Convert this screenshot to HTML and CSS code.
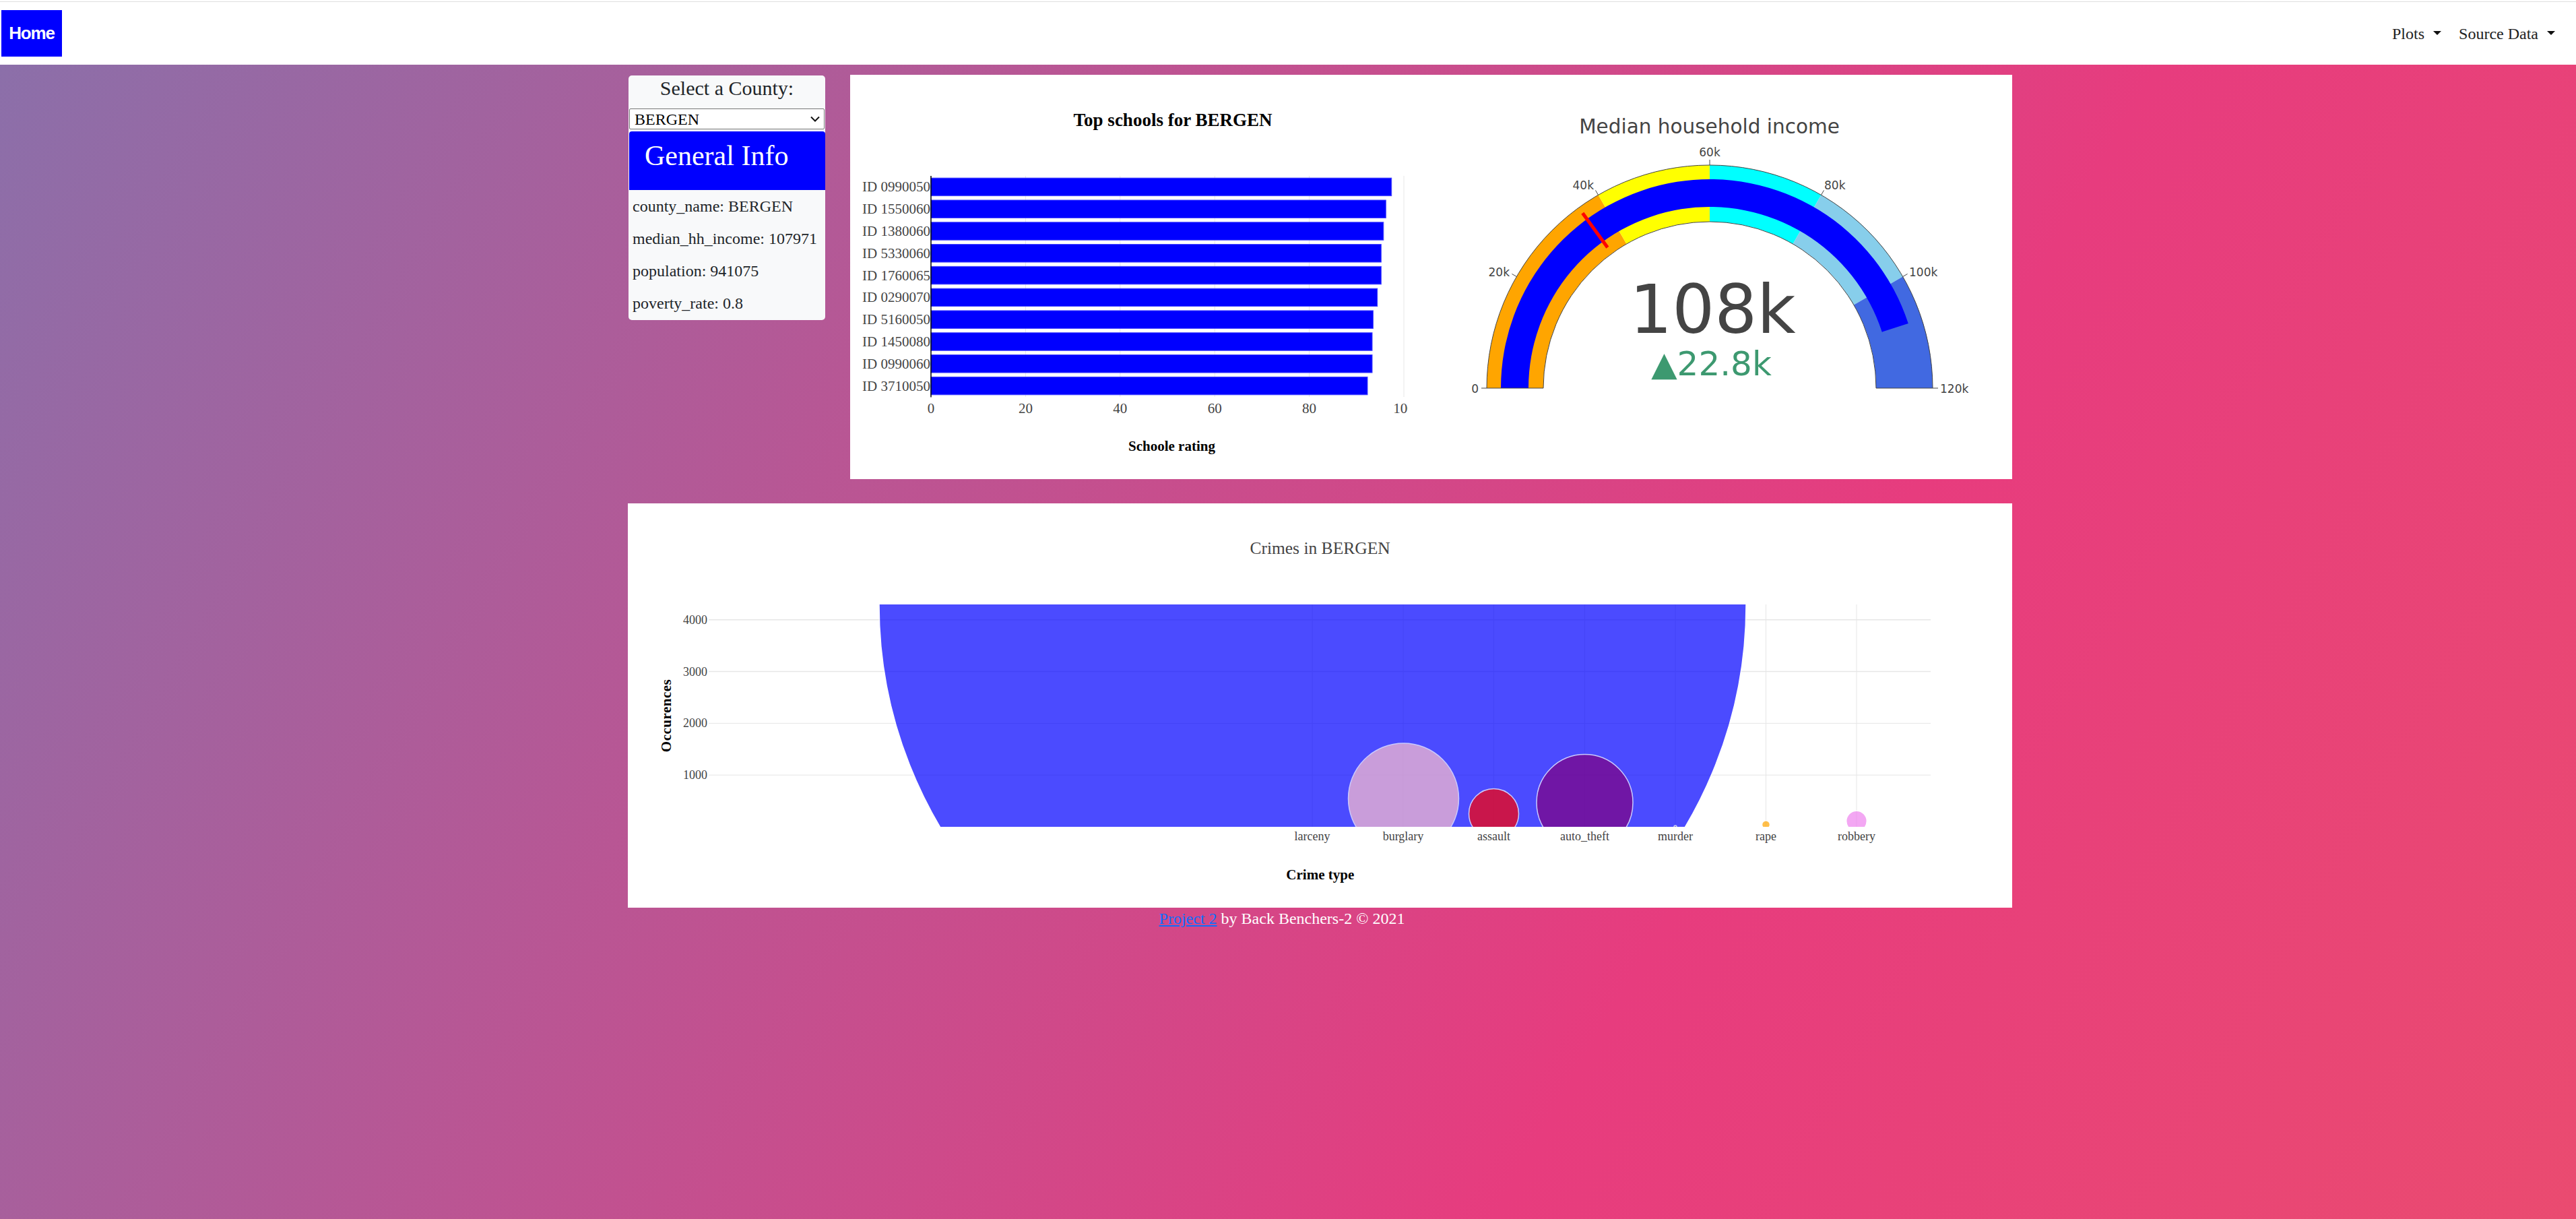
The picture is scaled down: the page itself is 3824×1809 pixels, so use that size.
FILE: index.html
```html
<!DOCTYPE html>
<html lang="en">
<head>
<meta charset="utf-8">
<title>County Dashboard</title>
<link rel="stylesheet" href="styles.css">
</head>
<body>
<header class="topbar">
  <nav class="nav">
    <a class="home" href="#">Home</a>
    <ul class="menu">
      <li><a href="#">Plots<span class="caret"></span></a></li>
      <li><a href="#">Source Data<span class="caret"></span></a></li>
    </ul>
  </nav>
</header>

<main class="main">
  <div class="row1">
    <aside class="panel">
      <div class="panel-label">Select a County:</div>
      <div class="select-wrap">
        <select class="county-select"><option>BERGEN</option></select>
        <svg class="chev" width="14" height="9" viewBox="0 0 14 9"><path d="M1 1.5 L7 7.5 L13 1.5" fill="none" stroke="#111" stroke-width="2"/></svg>
      </div>
      <div class="info-head">General Info</div>
      <div class="info-line">county_name: BERGEN</div>
      <div class="info-line">median_hh_income: 107971</div>
      <div class="info-line">population: 941075</div>
      <div class="info-line">poverty_rate: 0.8</div>
    </aside>

    <section class="chart-card">
      <svg class="bar-chart" width="828" height="600" viewBox="0 0 828 600">
        <text class="ttl-bold" x="479" y="76" text-anchor="middle">Top schools for BERGEN</text>
        <g stroke="#e6e6e6" stroke-width="1">
          <line x1="260.4" y1="150" x2="260.4" y2="478"/>
          <line x1="400.8" y1="150" x2="400.8" y2="478"/>
          <line x1="541.2" y1="150" x2="541.2" y2="478"/>
          <line x1="681.6" y1="150" x2="681.6" y2="478"/>
          <line x1="822" y1="150" x2="822" y2="478"/>
        </g>
        <g fill="#0000ff" stroke="#4646ff" stroke-width="1">
          <rect x="120" y="153.15" width="683.7" height="26.5"/>
          <rect x="120" y="185.95" width="675.3" height="26.5"/>
          <rect x="120" y="218.75" width="671.8" height="26.5"/>
          <rect x="120" y="251.55" width="668.3" height="26.5"/>
          <rect x="120" y="284.35" width="668.3" height="26.5"/>
          <rect x="120" y="317.15" width="662.7" height="26.5"/>
          <rect x="120" y="349.95" width="656.4" height="26.5"/>
          <rect x="120" y="382.75" width="655.0" height="26.5"/>
          <rect x="120" y="415.55" width="655.0" height="26.5"/>
          <rect x="120" y="448.35" width="648.0" height="26.5"/>
        </g>
        <line x1="120" y1="150" x2="120" y2="478.5" stroke="#000" stroke-width="1.5"/>
        <g class="tick-serif" text-anchor="end">
          <text x="119" y="173.4">ID 0990050</text>
          <text x="119" y="206.2">ID 1550060</text>
          <text x="119" y="239.0">ID 1380060</text>
          <text x="119" y="271.8">ID 5330060</text>
          <text x="119" y="304.6">ID 1760065</text>
          <text x="119" y="337.4">ID 0290070</text>
          <text x="119" y="370.2">ID 5160050</text>
          <text x="119" y="403.0">ID 1450080</text>
          <text x="119" y="435.8">ID 0990060</text>
          <text x="119" y="468.6">ID 3710050</text>
        </g>
        <g class="tick-serif" text-anchor="middle">
          <text x="120" y="502">0</text>
          <text x="260.4" y="502">20</text>
          <text x="400.8" y="502">40</text>
          <text x="541.2" y="502">60</text>
          <text x="681.6" y="502">80</text>
          <text x="822" y="502">100</text>
        </g>
        <text class="axis-title" x="477.5" y="558" text-anchor="middle">Schoole rating</text>
      </svg>

      <svg class="gauge" width="897" height="600" viewBox="0 0 897 600">
        <text class="g-title" x="447.5" y="87" text-anchor="middle">Median household income</text>
        <path d="M117 465 A331 331 0 0 1 282.5 178.35 L324.5 251.1 A247 247 0 0 0 201 465 Z" fill="#ffa500"/>
        <path d="M282.5 178.35 A331 331 0 0 1 448 134 L448 218 A247 247 0 0 0 324.5 251.1 Z" fill="#ffff00"/>
        <path d="M448 134 A331 331 0 0 1 613.5 178.35 L571.5 251.1 A247 247 0 0 0 448 218 Z" fill="#00ffff"/>
        <path d="M613.5 178.35 A331 331 0 0 1 734.65 299.5 L661.9 341.5 A247 247 0 0 0 571.5 251.1 Z" fill="#87ceeb"/>
        <path d="M734.65 299.5 A331 331 0 0 1 779 465 L695 465 A247 247 0 0 0 661.9 341.5 Z" fill="#4169e1"/>
        <path d="M138 465 A310 310 0 0 1 742.76 369.0 L703.77 381.69 A269 269 0 0 0 179 465 Z" fill="#0000ff"/>
        <line x1="296.35" y1="256.3" x2="259.3" y2="205.3" stroke="#ff0000" stroke-width="5"/>
        <path d="M117 465 A331 331 0 0 1 779 465 L695 465 A247 247 0 0 0 201 465 Z" fill="none" stroke="#444" stroke-width="1"/>
        <g stroke="#444" stroke-width="1">
          <line x1="117" y1="465" x2="109" y2="465"/>
          <line x1="161.35" y1="299.5" x2="154.4" y2="295.5"/>
          <line x1="282.5" y1="178.35" x2="278.5" y2="171.4"/>
          <line x1="448" y1="134" x2="448" y2="126"/>
          <line x1="613.5" y1="178.35" x2="617.5" y2="171.4"/>
          <line x1="734.65" y1="299.5" x2="741.6" y2="295.5"/>
          <line x1="779" y1="465" x2="787" y2="465"/>
        </g>
        <g class="g-tick">
          <text x="105" y="472" text-anchor="end">0</text>
          <text x="151" y="298.6" text-anchor="end">20k</text>
          <text x="276" y="169.5" text-anchor="end">40k</text>
          <text x="448" y="120.8" text-anchor="middle">60k</text>
          <text x="618" y="169.5">80k</text>
          <text x="744" y="298.6">100k</text>
          <text x="790" y="472">120k</text>
        </g>
        <text class="g-value" x="452.5" y="383" text-anchor="middle">108k</text>
        <text class="g-delta" x="450.5" y="446" text-anchor="middle">▲22.8k</text>
      </svg>
    </section>
  </div>

  <section class="crime-card">
    <svg width="2055" height="600" viewBox="0 0 2055 600">
      <defs>
        <clipPath id="plotclip"><rect x="120" y="150" width="1814" height="330"/></clipPath>
      </defs>
      <text class="c-title" x="1027.5" y="75" text-anchor="middle">Crimes in BERGEN</text>
      <g stroke="#e6e6e6" stroke-width="1">
        <line x1="120" y1="172.8" x2="1934" y2="172.8" stroke-width="1.5"/>
        <line x1="120" y1="249.6" x2="1934" y2="249.6" stroke-width="1.5"/>
        <line x1="120" y1="326.4" x2="1934" y2="326.4"/>
        <line x1="120" y1="403.2" x2="1934" y2="403.2"/>
        <line x1="1016" y1="150" x2="1016" y2="480"/>
        <line x1="1151" y1="150" x2="1151" y2="480"/>
        <line x1="1285.5" y1="150" x2="1285.5" y2="480"/>
        <line x1="1420.5" y1="150" x2="1420.5" y2="480"/>
        <line x1="1555" y1="150" x2="1555" y2="480"/>
        <line x1="1689.5" y1="150" x2="1689.5" y2="480"/>
        <line x1="1824" y1="150" x2="1824" y2="480"/>
      </g>
      <g clip-path="url(#plotclip)" stroke="#fff" stroke-width="1.5">
        <circle cx="1016.5" cy="151" r="643.5" fill="#0000ff" opacity="0.7"/>
        <circle cx="1151.5" cy="438" r="82" fill="#ffc0cb" opacity="0.7"/>
        <circle cx="1285.5" cy="460.5" r="37" fill="#ff0000" opacity="0.7"/>
        <circle cx="1420.5" cy="444" r="71.5" fill="#800080" opacity="0.7"/>
        <circle cx="1555" cy="480" r="2" fill="#999" opacity="0.7"/>
        <circle cx="1689.5" cy="476.7" r="6" fill="#ffa500" opacity="0.7"/>
        <circle cx="1824" cy="471.6" r="15.3" fill="#ee82ee" opacity="0.7"/>
      </g>
      <g class="c-tick" text-anchor="end">
        <text x="118" y="178.8">4000</text>
        <text x="118" y="255.6">3000</text>
        <text x="118" y="332.4">2000</text>
        <text x="118" y="409.2">1000</text>
      </g>
      <g class="c-tick" text-anchor="middle">
        <text x="1016" y="500">larceny</text>
        <text x="1151" y="500">burglary</text>
        <text x="1285.5" y="500">assault</text>
        <text x="1420.5" y="500">auto_theft</text>
        <text x="1555" y="500">murder</text>
        <text x="1689.5" y="500">rape</text>
        <text x="1824" y="500">robbery</text>
      </g>
      <text class="axis-title" x="1027.8" y="557.6" text-anchor="middle">Crime type</text>
      <text class="axis-title occ" transform="translate(64,315) rotate(-90)" text-anchor="middle">Occurences</text>
    </svg>
  </section>
</main>

<footer class="footer"><a href="#">Project 2</a> by Back Benchers-2 © 2021</footer>
</body>
</html>
```

FILE: styles.css
```css
html {
  height: 100%;
}

body {
  margin: 0;
  min-height: 100%;
  font-family: "Liberation Serif", "Times New Roman", serif;
  color: #212529;
  background: linear-gradient(120deg, #8a70aa 0%, #e73c7e 67%, #ea4b70 100%);
  background-attachment: fixed;
}

/* ---------- top navigation ---------- */
.topbar {
  background: #ffffff;
  padding-top: 2px;
}

.nav {
  height: 93px;
  border-top: 1px solid #dedede;
  display: flex;
  align-items: center;
  justify-content: space-between;
  padding: 0 18px 0 2px;
}

.home {
  width: 90px;
  height: 69px;
  background: #0000ff;
  color: #ffffff;
  font-family: "Liberation Sans", Arial, sans-serif;
  font-weight: bold;
  font-size: 26px;
  letter-spacing: -1.2px;
  text-decoration: none;
  display: flex;
  align-items: center;
  justify-content: center;
}

.menu {
  list-style: none;
  margin: 0;
  padding: 0;
  display: flex;
}

.menu a {
  display: block;
  padding: 0 13px;
  font-size: 24px;
  line-height: 36px;
  color: #222;
  text-decoration: none;
}

.caret {
  display: inline-block;
  margin-left: 13px;
  width: 0;
  height: 0;
  border-top: 6px solid #111;
  border-left: 6px solid transparent;
  border-right: 6px solid transparent;
  vertical-align: 6px;
}

/* ---------- main layout ---------- */
.main {
  width: 2056px;
  margin-left: calc(50% - 980px);
  padding-top: 15px;
}

.row1 {
  display: flex;
  align-items: flex-start;
  gap: 37px;
}

.panel {
  width: 292px;
  margin: 1px 0 0 1px;
  background: #f8f9fa;
  border-radius: 5px;
  padding-bottom: 1px;
}

.panel-label {
  text-align: center;
  font-size: 30px;
  line-height: 37px;
  margin-bottom: 12px;
}

.select-wrap {
  position: relative;
  margin: 0 1px;
}

.county-select {
  display: block;
  width: 100%;
  height: 31px;
  -webkit-appearance: none;
  appearance: none;
  border: 1px solid #767676;
  border-radius: 2px;
  background: #ffffff;
  color: #000;
  font-family: "Liberation Serif", "Times New Roman", serif;
  font-size: 24px;
  padding: 0 0 0 7px;
  margin: 0;
}

.chev {
  position: absolute;
  right: 7px;
  top: 11px;
}

.info-head {
  margin: 3px 0 0 1px;
  background: #0000ff;
  color: #ffffff;
  font-size: 42px;
  line-height: 50px;
  padding: 11px 23px 26px;
  border-radius: 4px 4px 0 0;
}

.info-line {
  font-size: 24px;
  line-height: 48px;
  padding-left: 6px;
}

.chart-card {
  width: 1725px;
  height: 600px;
  background: #ffffff;
  display: flex;
}

.chart-card svg {
  display: block;
  overflow: hidden;
}

.crime-card {
  margin-top: 36px;
  width: 2055px;
  height: 600px;
  background: #ffffff;
}

.crime-card svg {
  display: block;
}

/* ---------- chart text ---------- */
.ttl-bold {
  font-family: "Liberation Serif", "Times New Roman", serif;
  font-weight: bold;
  font-size: 27px;
  fill: #000;
}

.tick-serif {
  font-family: "Liberation Serif", "Times New Roman", serif;
  font-size: 21px;
  fill: #444;
}

.axis-title {
  font-family: "Liberation Serif", "Times New Roman", serif;
  font-weight: bold;
  font-size: 21px;
  fill: #000;
}

.occ {
  letter-spacing: 0.5px;
}

.g-title {
  font-family: "DejaVu Sans", Verdana, sans-serif;
  font-size: 29.5px;
  fill: #444;
}

.g-tick {
  font-family: "DejaVu Sans", Verdana, sans-serif;
  font-size: 17px;
  fill: #444;
}

.g-value {
  font-family: "DejaVu Sans", Verdana, sans-serif;
  font-size: 99px;
  fill: #444;
}

.g-delta {
  font-family: "DejaVu Sans", Verdana, sans-serif;
  font-size: 50px;
  fill: #3d9970;
}

.c-title {
  font-family: "Liberation Serif", "Times New Roman", serif;
  font-size: 25.5px;
  fill: #444;
}

.c-tick {
  font-family: "Liberation Serif", "Times New Roman", serif;
  font-size: 18px;
  fill: #444;
}

/* ---------- footer ---------- */
.footer {
  text-align: center;
  padding-right: 18px;
  font-size: 24px;
  line-height: 33.6px;
  color: #ffffff;
}

.footer a {
  color: #0d6efd;
}
```
